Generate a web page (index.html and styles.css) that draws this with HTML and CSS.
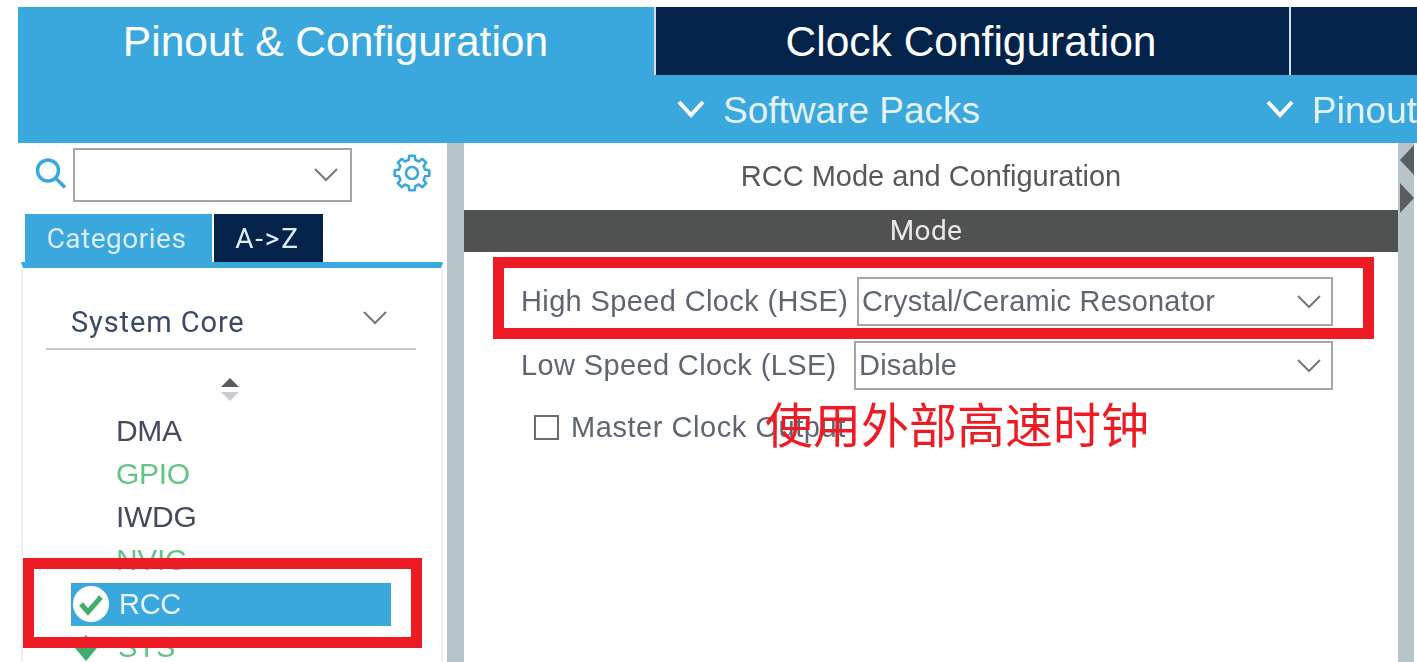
FILE: index.html
```html
<!DOCTYPE html>
<html lang="en">
<head>
    <meta charset="UTF-8">
    <meta name="viewport" content="width=device-width, initial-scale=1.0">
    <title>RCC Mode and Configuration</title>
    <link rel="stylesheet" href="styles.css">
</head>
<body>
    <div class="screen">
        <!-- Top tabs -->
        <header class="header">
            <nav class="tabs">
                <div class="tab tab-active">Pinout &amp; Configuration</div>
                <div class="tab tab-clock">Clock Configuration</div>
                <div class="tab tab-rest"></div>
            </nav>
            <div class="subbar">
                <div class="subitem subitem-packs">
                    <svg class="sub-chevron" viewBox="0 0 28 18"><path d="M2 2l12 13L26 2"/></svg>
                    <span>Software Packs</span>
                </div>
                <div class="subitem">
                    <svg class="sub-chevron" viewBox="0 0 28 18"><path d="M2 2l12 13L26 2"/></svg>
                    <span>Pinout</span>
                </div>
            </div>
        </header>

        <div class="workspace">
            <!-- Left categories panel -->
            <aside class="sidebar">
                <div class="search-row">
                    <svg class="search-icon" viewBox="0 0 32 32"><circle cx="13" cy="13" r="10.5"/><path d="M21 21l9 9"/></svg>
                    <div class="search-box">
                        <svg class="chevron" viewBox="0 0 24 14"><path d="M1 1l11 11L23 1"/></svg>
                    </div>
                    <svg class="gear-icon" viewBox="0 0 38 38">
                        <polygon points="16.26,1.71 21.74,1.71 22.27,5.9 25.95,7.43 29.29,4.84 33.16,8.71 30.57,12.05 32.1,15.73 36.29,16.26 36.29,21.74 32.1,22.27 30.57,25.95 33.16,29.29 29.29,33.16 25.95,30.57 22.27,32.1 21.74,36.29 16.26,36.29 15.73,32.1 12.05,30.57 8.71,33.16 4.84,29.29 7.43,25.95 5.9,22.27 1.71,21.74 1.71,16.26 5.9,15.73 7.43,12.05 4.84,8.71 8.71,4.84 12.05,7.43 15.73,5.9"/>
                        <circle cx="19" cy="19" r="6"/>
                    </svg>
                </div>
                <div class="side-tabs">
                    <div class="side-tab side-tab-active">Categories</div>
                    <div class="side-tab side-tab-dark">A-&gt;Z</div>
                </div>
                <div class="side-panel">
                    <div class="group-head">
                        <span>System Core</span>
                        <svg class="chevron" viewBox="0 0 24 14"><path d="M1 1l11 11L23 1"/></svg>
                    </div>
                    <div class="sort-arrows">
                        <svg viewBox="0 0 18 24"><path class="sort-up" d="M9 0l9 9H0z"/><path class="sort-down" d="M0 14h18l-9 9z"/></svg>
                    </div>
                    <ul class="peripherals">
                        <li class="peripheral">DMA</li>
                        <li class="peripheral peripheral-ok">GPIO</li>
                        <li class="peripheral">IWDG</li>
                        <li class="peripheral peripheral-ok">NVIC</li>
                        <li class="peripheral peripheral-selected">
                            <svg class="check-icon" viewBox="0 0 36 36"><circle cx="18" cy="18" r="18"/><path d="M8 18l7 8L28 11"/></svg>
                            RCC
                        </li>
                        <li class="peripheral peripheral-ok peripheral-sys">
                            <svg class="sys-icon" viewBox="0 0 22 26"><path d="M11 0l11 13-11 13L0 13z"/></svg>
                            SYS
                        </li>
                    </ul>
                </div>
            </aside>

            <div class="splitter"></div>

            <!-- Mode panel -->
            <main class="content">
                <h1 class="content-title">RCC Mode and Configuration</h1>
                <div class="mode-bar">Mode</div>
                <div class="form">
                    <div class="form-row form-row-hse">
                        <label class="form-label">High Speed Clock (HSE)</label>
                        <div class="select select-hse">
                            <span>Crystal/Ceramic Resonator</span>
                            <svg class="chevron" viewBox="0 0 24 14"><path d="M1 1l11 11L23 1"/></svg>
                        </div>
                    </div>
                    <div class="form-row form-row-lse">
                        <label class="form-label">Low Speed Clock (LSE)</label>
                        <div class="select select-lse">
                            <span>Disable</span>
                            <svg class="chevron" viewBox="0 0 24 14"><path d="M1 1l11 11L23 1"/></svg>
                        </div>
                    </div>
                    <div class="check-row">
                        <span class="checkbox"></span>
                        <span class="form-label">Master Clock Output</span>
                    </div>
                </div>
            </main>

            <div class="side-strip">
                <svg class="strip-arrow" viewBox="0 0 14 30"><path d="M14 0v30L0 15z"/></svg>
                <svg class="strip-arrow" viewBox="0 0 14 30"><path d="M0 0v30l14-15z"/></svg>
            </div>
        </div>

        <!-- Annotations drawn over the screenshot -->
        <div class="mark mark-rcc"></div>
        <div class="mark mark-hse"></div>
        <div class="note">使用外部高速时钟</div>
    </div>
</body>
</html>
```

FILE: styles.css
```css
/* Global Styles */
* { margin: 0; padding: 0; box-sizing: border-box; }
html, body { height: 100%; overflow: hidden; background: #fff; }
body { font-family: "Liberation Sans", Arial, sans-serif; }
svg { display: block; }

.screen {
    position: relative;
    width: 1417px;
    height: 662px;
    padding: 7px 0 0 18px;
    overflow: hidden;
    filter: blur(0.7px);
}

/* Header */
.header { background-color: #3aa8dc; height: 136px; color: #fff; }
.tabs { display: flex; height: 68px; }
.tab {
    display: flex;
    align-items: center;
    justify-content: center;
    padding-top: 2px;
    font-size: 42.5px;
    background-color: #03234b;
    border-left: 2px solid #d4dce2;
}
.tab-active { width: 636px; padding-right: 1px; background-color: #3aa8dc; border-left: 0; }
.tab-clock { width: 635px; padding-right: 3px; }
.tab-rest { flex: 1; }
.subbar { display: flex; height: 68px; padding: 4px 0 0 659px; font-size: 37px; color: #e4f3fb; }
.subitem { display: flex; align-items: center; gap: 18px; }
.subitem-packs { width: 590px; }
.sub-chevron { width: 28px; height: 18px; margin-top: -4px; fill: none; stroke: #fff; stroke-width: 4; }

/* Workspace */
.workspace { display: flex; height: 519px; }
.sidebar { width: 429px; padding-top: 5px; }
.splitter { width: 17px; background-color: #b8c4cb; }
.content { width: 934px; }
.side-strip {
    display: flex;
    flex-direction: column;
    gap: 8px;
    width: 16px;
    padding: 2px 0 0 2px;
    background-color: #b8c4cb;
}
.strip-arrow { width: 14px; height: 30px; fill: #5a5c5e; }

.chevron { width: 24px; height: 14px; fill: none; stroke: #75787b; stroke-width: 2; }

/* Sidebar */
.search-row { display: flex; align-items: flex-start; height: 66px; padding-left: 17px; }
.search-icon { width: 32px; height: 33px; margin-top: 9px; fill: none; stroke: #3aa8dc; stroke-width: 3.5; }
.search-box {
    display: flex;
    align-items: center;
    justify-content: flex-end;
    width: 279px;
    height: 54px;
    margin-left: 6px;
    padding-right: 12px;
    border: 2px solid #a4a7aa;
}
.gear-icon { width: 38px; height: 38px; margin: 6px 0 0 41px; fill: none; stroke: #3aa8dc; stroke-width: 2.6; stroke-linejoin: round; }

.side-tabs { display: flex; gap: 2px; height: 48px; padding-left: 7px; font-family: Roboto, sans-serif; }
.side-tab {
    display: flex;
    align-items: center;
    justify-content: center;
    font-size: 28px;
    letter-spacing: 0.5px;
    color: #dcecf6;
}
.side-tab-active { width: 187px; padding-right: 4px; background-color: #3aa8dc; }
.side-tab-dark { width: 109px; padding-right: 2px; background-color: #03234b; letter-spacing: 1.8px; }

.side-panel {
    height: 400px;
    margin-left: 3px;
    width: 422px;
    border-top: 6px solid #3aa8dc;
    border-left: 2px solid #eef0f3;
    border-right: 2px solid #eef0f3;
    overflow: hidden;
}
.group-head {
    display: flex;
    align-items: flex-start;
    justify-content: space-between;
    height: 82px;
    margin: 0 25px 0 23px;
    padding: 37px 29px 0 25px;
    border-bottom: 2px solid #c5cad0;
    font-family: Roboto, sans-serif;
    font-size: 29px;
    letter-spacing: 0.9px;
    color: #3d4a66;
}
.group-head .chevron { margin-top: 6px; }
.sort-arrows { display: flex; justify-content: center; padding: 28px 0 7px; margin-right: 4px; }
.sort-arrows svg { width: 18px; height: 24px; }
.sort-up { fill: #5a5c5e; }
.sort-down { fill: #c8ccd0; }

.peripherals { list-style: none; }
.peripheral {
    position: relative;
    display: flex;
    align-items: center;
    height: 43px;
    margin-left: 48px;
    width: 320px;
    padding-left: 45px;
    font-size: 30px;
    letter-spacing: -0.3px;
    color: #454a60;
}
.peripheral-ok { color: #62c487; }
.peripheral-selected { margin-top: 2px; padding-left: 48px; font-size: 29px; color: #e8f5fb; background-color: #3aa8dc; }
.peripheral-sys { padding-left: 47px; font-size: 29px; }
.check-icon { position: absolute; left: 2px; top: 3px; width: 36px; height: 36px; }
.check-icon circle { fill: #fff; }
.check-icon path { fill: none; stroke: #3fae6a; stroke-width: 5; }
.sys-icon { position: absolute; left: 4px; top: 9px; width: 22px; height: 26px; fill: #3fae6a; }

/* Mode panel */
.content-title {
    height: 67px;
    padding-top: 14px;
    font-size: 29px;
    font-weight: normal;
    line-height: 38px;
    text-align: center;
    color: #55585c;
}
.mode-bar {
    height: 42px;
    padding-right: 10px;
    line-height: 42px;
    font-family: Roboto, sans-serif;
    font-size: 28px;
    letter-spacing: 0.4px;
    text-align: center;
    color: #e8e8e8;
    background-color: #505251;
}
.form { padding: 25px 65px 0 57px; }
.form-row { display: flex; align-items: center; justify-content: space-between; }
.form-row-lse { margin-top: 15px; }
.form-label { font-size: 29px; letter-spacing: 0.37px; color: #5f6672; white-space: nowrap; }
.select {
    display: flex;
    align-items: center;
    justify-content: space-between;
    height: 49px;
    padding: 0 10px 0 3px;
    border: 2px solid #a4a7aa;
    font-size: 29px;
    letter-spacing: 0.2px;
    color: #5f6672;
}
.select-hse { width: 476px; }
.select-lse { width: 479px; }
.check-row { display: flex; align-items: center; gap: 12px; margin: 24px 0 0 13px; height: 27px; }
.checkbox { width: 25px; height: 25px; border: 2px solid #6a6d70; }
.check-row .form-label { letter-spacing: 0.55px; }

/* Annotations */
.mark { position: absolute; border: 11px solid #ed1c24; }
.mark-rcc { left: 23px; top: 558px; width: 399px; height: 90px; }
.mark-hse { left: 493px; top: 257px; width: 881px; height: 82px; }
.note {
    position: absolute;
    left: 765px;
    top: 387px;
    font-family: "Noto Sans CJK SC", sans-serif;
    font-size: 48px;
    line-height: 70px;
    color: #ed1c24;
}
```
